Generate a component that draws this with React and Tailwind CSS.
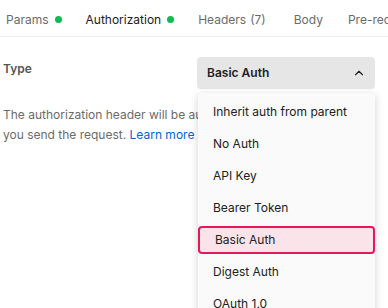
import { ChevronUp } from 'lucide-react';

const tabs = [
  { label: 'Params', dot: true, gap: 'mr-[24px]' },
  { label: 'Authorization', dot: true, active: true, gap: 'mr-[24px]' },
  { label: 'Headers', count: '(7)', gap: 'mr-[28px]' },
  { label: 'Body', gap: 'mr-[25px]' },
  { label: 'Pre-request Script', gap: 'mr-[25px]' },
];

const options = [
  'Inherit auth from parent',
  'No Auth',
  'API Key',
  'Bearer Token',
  'Basic Auth',
  'Digest Auth',
  'OAuth 1.0',
  'OAuth 2.0',
];

function App() {
  return (
    <div className="h-[308px] w-[388px] overflow-hidden bg-white text-[12px] font-['Inter',sans-serif]">
      {/* tab strip */}
      <div className="flex h-[37px] overflow-hidden border-b border-[#ededed] pl-[6px] whitespace-nowrap">
        {tabs.map((t) => (
          <div
            key={t.label}
            className={`relative flex h-full shrink-0 items-center gap-[6px] pt-[3px] ${t.gap} ${
              t.active ? 'text-[#212121]' : 'text-[#6b6b6b]'
            }`}
          >
            <span>
              {t.label}
              {t.count && <span className="ml-[4px] text-[#6b6b6b]">{t.count}</span>}
            </span>
            {t.dot && <span className="h-[7px] w-[7px] rounded-full bg-[#0cbb52]" />}
            {t.active && <span className="absolute -bottom-[2px] -left-[1px] -right-[1px] h-[2px] bg-[#ff6c37]" />}
          </div>
        ))}
      </div>

      <div className="flex">
        {/* left column */}
        <div className="w-[197px] shrink-0 pl-[3px]">
          <div className="mt-[23px] font-semibold text-[#555]">Type</div>
          <p className="mt-[27px] w-[380px] leading-[20px] text-[#6b6b6b]">
            The authorization header will be automatically generated when you send the request.{' '}
            <span className="text-[#0265d2]">Learn more</span>
          </p>
        </div>

        {/* select + menu */}
        <div className="relative z-10 w-[178px] pt-[20px]">
          <div className="flex h-[32px] items-center justify-between rounded-[4px] bg-[#e6e6e6] pl-[10px] pr-[9px]">
            <span className="font-semibold text-[#212121]">Basic Auth</span>
            <ChevronUp size={14} strokeWidth={2} className="text-[#212121]" />
          </div>
          <div className="mt-[4px] ml-[1px] rounded-[4px] bg-[#fafafa] pt-[5px] shadow-[0_2px_8px_rgba(0,0,0,0.18)]">
            {options.map((o) => (
              <div
                key={o}
                className={`mb-[4px] flex h-[28px] items-center rounded-[4px] pl-[15px] text-[#212121] ${
                  o === 'Basic Auth' ? 'border-2 border-[#e8175d] bg-[#fbe3ea] pl-[13px]' : ''
                }`}
              >
                {o}
              </div>
            ))}
          </div>
        </div>
      </div>
    </div>
  );
}

export default App;
